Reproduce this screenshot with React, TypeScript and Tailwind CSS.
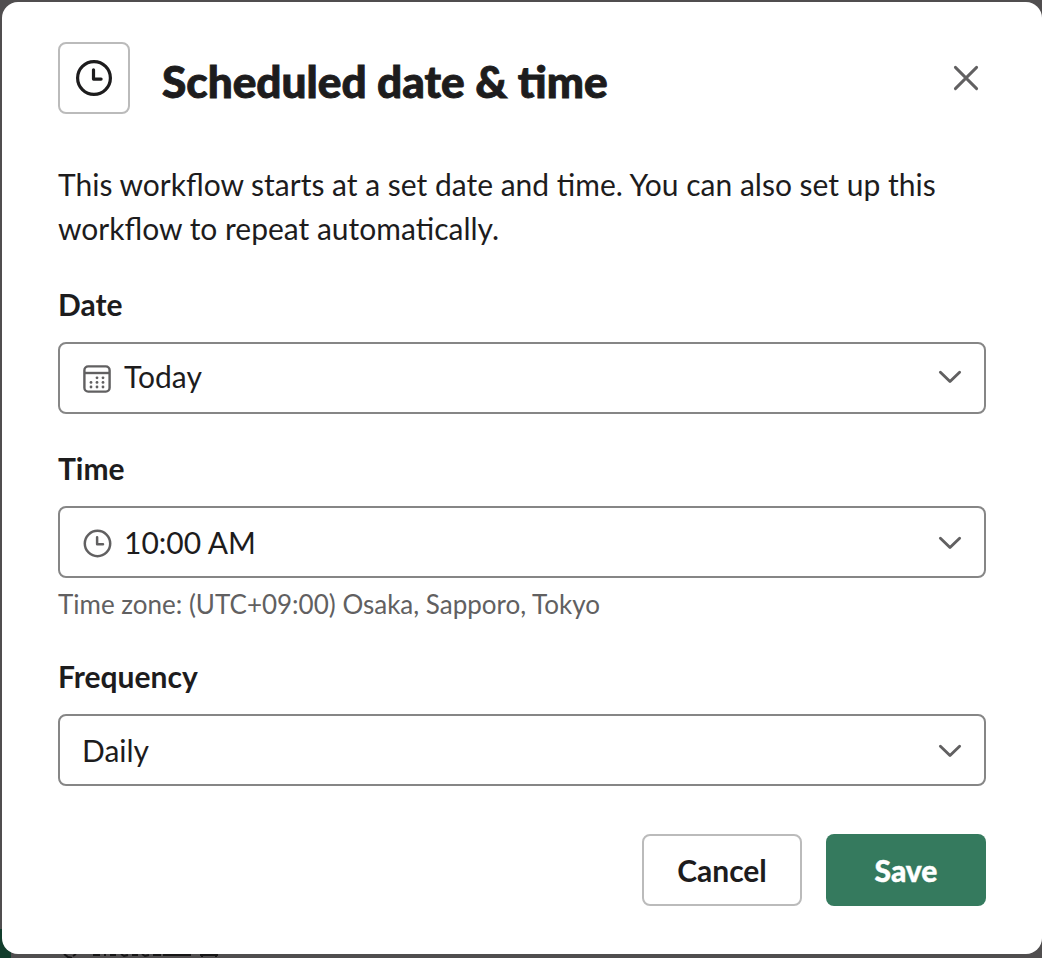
import type { ReactNode } from 'react';

function ClockIcon({ size }: { size: number }) {
  return (
    <svg width={size} height={size} viewBox="0 0 20 20" fill="none" stroke="currentColor" strokeWidth="1.6" strokeLinecap="round" strokeLinejoin="round" className="shrink-0">
      <circle cx="10" cy="10" r="8.2" />
      <path d="M9.75 5.9v4.65h3.8" />
    </svg>
  );
}

function CalendarIcon() {
  return (
    <svg width="28" height="28" viewBox="0 0 28 28" className="mt-[4px] shrink-0" fill="none">
      <rect x="1.4" y="1.4" width="25.2" height="25.2" rx="3.8" stroke="currentColor" strokeWidth="2.4" />
      <path d="M1.5 8h25" stroke="currentColor" strokeWidth="2.4" />
      <g fill="currentColor">
        <circle cx="14" cy="12.8" r="1.4" />
        <circle cx="20" cy="12.8" r="1.4" />
        <circle cx="8" cy="17.4" r="1.4" />
        <circle cx="14" cy="17.4" r="1.4" />
        <circle cx="20" cy="17.4" r="1.4" />
        <circle cx="8" cy="22" r="1.4" />
        <circle cx="14" cy="22" r="1.4" />
        <circle cx="20" cy="22" r="1.4" />
      </g>
    </svg>
  );
}

function Chevron() {
  return (
    <svg width="24" height="14" viewBox="0 0 24 14" fill="none" stroke="#616061" strokeWidth="2.9" strokeLinecap="round" strokeLinejoin="round" className="ml-auto shrink-0">
      <path d="M2.4 2.2L12 11.5l9.6-9.3" />
    </svg>
  );
}

function Select({ icon, className, children }: { icon?: ReactNode; className: string; children: ReactNode }) {
  return (
    <button type="button" className={`flex h-[72px] w-full items-center rounded-lg border-2 border-[#868686] px-[22px] text-left ${className}`}>
      {icon && <span className="mr-3 flex w-[30px] justify-center text-[#616061]">{icon}</span>}
      <span className="-mt-[2px]">{children}</span>
      <Chevron />
    </button>
  );
}

export default function App() {
  return (
    <div className="relative h-[958px] w-[1042px] overflow-hidden bg-[#504e4f] pt-[2px] pl-[2px] font-['Lato',sans-serif] text-[30px] leading-[44px] text-[#1d1c1d]">
      <div className="absolute bottom-0 left-0 h-[29px] w-[11px] bg-[#123d2c]" />
      <svg className="absolute bottom-0 left-[60px]" width="160" height="5" viewBox="0 0 160 5" fill="none" stroke="#161516" strokeWidth="2">
        <path d="M4 1l4 3 4 1M16 1l-3 2M33 2h7M45 1v2M50 2h6M61 1l3 2 4-1M72 2h6M82 1l3 2 4-1M93 2h8M103 2h28M140 2h18M142 2v2M156 2v2" />
      </svg>
      <main className="relative flex h-[952px] w-[1040px] flex-col rounded-[16px] bg-white px-[56px] pt-[40px]">
        <header className="flex h-[72px] items-center">
          <div className="flex h-[72px] w-[72px] items-center justify-center rounded-lg border-2 border-[#bbb]">
            <ClockIcon size={40} />
          </div>
          <h1 className="ml-8 pt-[6px] text-[44.15px] leading-[60px] font-black [-webkit-text-stroke:0.9px_#1d1c1d]">Scheduled date &amp; time</h1>
          <button type="button" aria-label="Close" className="mr-[6px] ml-auto text-[#616061]">
            <svg width="28" height="28" viewBox="0 0 28 28" fill="none" stroke="currentColor" strokeWidth="2.9" strokeLinecap="round">
              <path d="M3.4 3.4l21.2 21.2M24.6 3.4L3.4 24.6" />
            </svg>
          </button>
        </header>
        <p className="mt-[48px] w-[928px]">
          This workflow starts at a set date and time. You can also set up this workflow to repeat automatically.
        </p>
        <section className="mt-8">
          <div className="mb-4 font-bold">Date</div>
          <Select className="pb-[2px]" icon={<CalendarIcon />}>Today</Select>
        </section>
        <section className="mt-8">
          <div className="mb-4 font-bold">Time</div>
          <Select className="pt-[2px]" icon={<ClockIcon size={31} />}>10:00 AM</Select>
          <div className="mt-[8px] text-[26px] leading-[36px] text-[#616061]">Time zone: (UTC+09:00) Osaka, Sapporo, Tokyo</div>
        </section>
        <section className="mt-8">
          <div className="mb-4 font-bold">Frequency</div>
          <Select className="pt-[2px]">Daily</Select>
        </section>
        <footer className="mt-12 flex justify-end gap-6">
          <button type="button" className="h-[72px] w-[160px] rounded-lg border-2 border-[#bbb] font-bold">Cancel</button>
          <button type="button" className="h-[72px] w-[160px] rounded-lg bg-[#357a5e] font-black text-white [-webkit-text-stroke:0.4px_white]">Save</button>
        </footer>
      </main>
    </div>
  );
}
